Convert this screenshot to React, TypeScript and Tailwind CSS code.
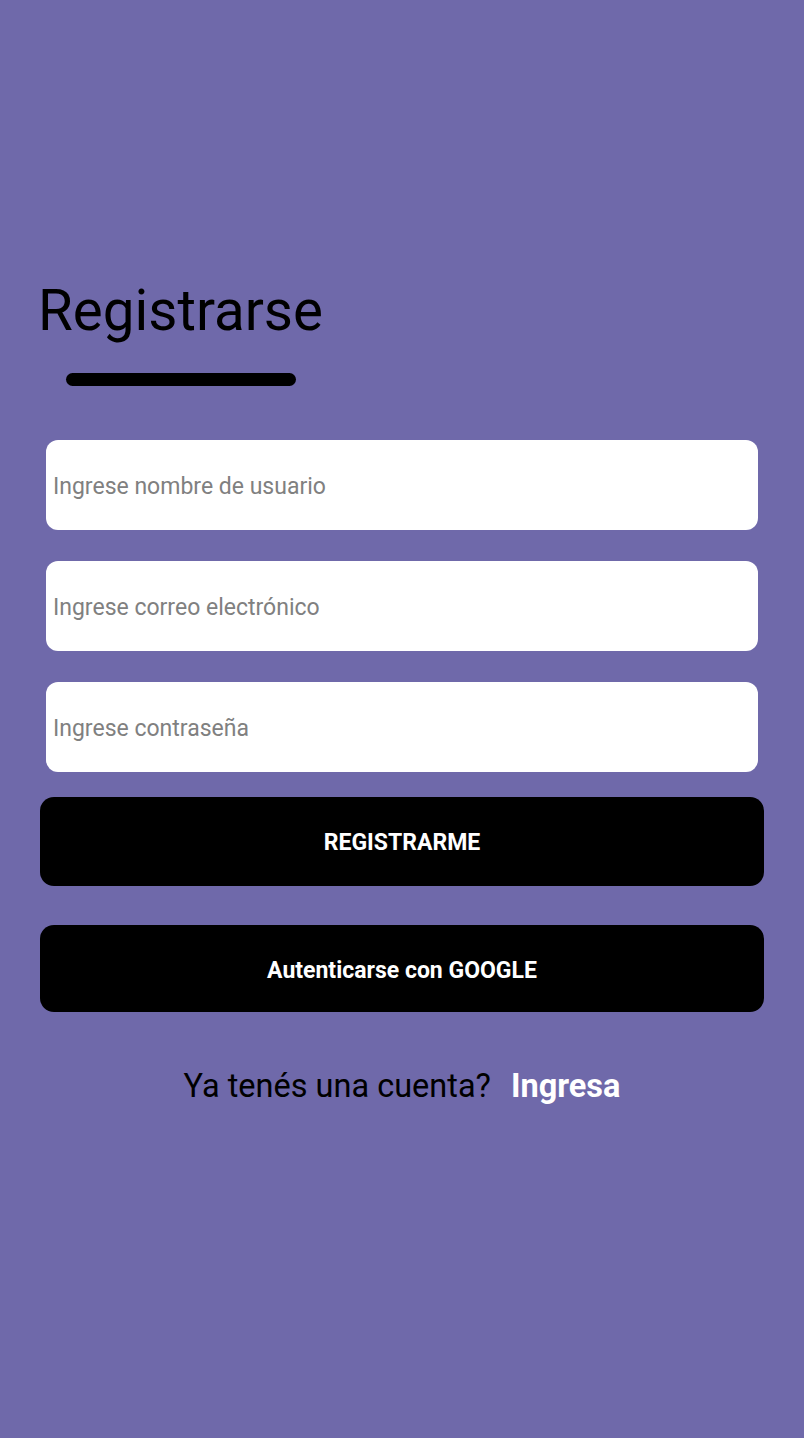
export default function App() {
  return (
    <div
      className="w-[804px] h-[1438px] bg-[#6f69aa] flex flex-col"
      style={{ fontFamily: "Roboto, 'Noto Sans', sans-serif" }}
    >
      <div className="pt-[272px] pl-[38px]">
        <h1 className="text-[56.5px] leading-[78px] text-black font-normal">Registrarse</h1>
        <div className="ml-[28px] mt-[23px] w-[230px] h-[13px] bg-black rounded-full" />
      </div>

      <div className="mt-[54px] px-[46px] flex flex-col gap-[31px]">
        {["Ingrese nombre de usuario", "Ingrese correo electrónico", "Ingrese contraseña"].map((p) => (
          <div key={p} className="h-[90px] bg-white rounded-[12px] flex items-center pl-[7px]">
            <span className="text-[23px] text-[#808080] pt-[4px]">{p}</span>
          </div>
        ))}
      </div>

      <div className="mt-[25px] px-[40px] flex flex-col gap-[39px]">
        <button className="h-[89px] pt-[4px] bg-black rounded-[14px] text-white font-bold text-[23px]">
          REGISTRARME
        </button>
        <button className="h-[87px] pt-[5px] bg-black rounded-[14px] text-white font-bold text-[23px]">
          Autenticarse con GOOGLE
        </button>
      </div>

      <div className="mt-[50px] flex justify-center items-center gap-[20px] text-[32.5px]">
        <span className="text-black">Ya tenés una cuenta?</span>
        <span className="text-white font-bold">Ingresa</span>
      </div>
    </div>
  );
}
